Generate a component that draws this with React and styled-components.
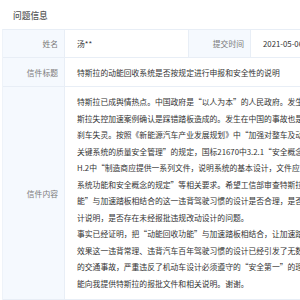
import React from 'react';
import styled, { createGlobalStyle } from 'styled-components';

const GlobalStyle = createGlobalStyle`
  html, body {
    margin: 0;
    padding: 0;
    background: #fff;
    overflow: hidden;
  }
  body {
    font-family: "Noto Sans CJK SC", "Noto Sans", sans-serif;
  }
`;

const StyledPage = styled.div`
  width: 100vw;
  height: 100vh;
  overflow: hidden;
`;

const SectionTitle = styled.h3`
  margin: 0;
  padding: 8px 13px 5px;
  font-size: 8.7px;
  line-height: 16px;
  font-weight: 500;
  color: #555;
`;

const InfoTable = styled.div`
  display: grid;
  grid-template-columns: 62px 124px 62px 124px;
  width: 372px;
  margin-left: 2px;
  border-top: 1px solid #e8eef6;
  border-left: 1px solid #eef3f9;
  font-size: 7.8px;
`;

const Label = styled.div`
  display: flex;
  align-items: center;
  justify-content: flex-end;
  box-sizing: border-box;
  min-height: ${(p) => p.$h || 28}px;
  padding: 0 6px;
  background: #f5f9fe;
  color: #7a7a7a;
  border-right: 1px solid #e8eef6;
  border-bottom: 1px solid #e8eef6;
  white-space: nowrap;
`;

const Value = styled.div`
  grid-column: span ${(p) => p.$span || 1};
  display: flex;
  align-items: center;
  box-sizing: border-box;
  min-height: ${(p) => p.$h || 28}px;
  padding: 0 12px;
  color: #333;
  border-right: 1px solid #e8eef6;
  border-bottom: 1px solid #e8eef6;
  white-space: nowrap;
`;

const Letter = styled.div`
  grid-column: span 3;
  box-sizing: border-box;
  padding: 7px 12px;
  color: #333;
  line-height: 16.5px;
  border-bottom: 1px solid #e8eef6;
`;

const LetterLine = styled.div`
  white-space: nowrap;
`;

const letterLines = [
  '特斯拉已成舆情热点。中国政府是“以人为本”的人民政府。发生在美国的特',
  '斯拉失控加速案例确认是踩错踏板造成的。发生在中国的事故也是车主称的',
  '刹车失灵。按照《新能源汽车产业发展规划》中“加强对整车及动力电池等',
  '关键系统的质量安全管理”的规定，国标21670中3.2.1“安全概念”',
  'H.2中“制造商应提供一系列文件，说明系统的基本设计，文件应说明',
  '系统功能和安全概念的规定”等相关要求。希望工信部审查特斯拉“动能回收功',
  '能”与加速踏板相结合的这一违背驾驶习惯的设计是否合理，是否提交了设',
  '计说明，是否存在未经报批违规改动设计的问题。',
  '事实已经证明，把“动能回收功能”与加速踏板相结合，让加速踏板具有制动',
  '效果这一违背常理、违背汽车百年驾驶习惯的设计已经引发了无数起严重',
  '的交通事故，严重违反了机动车设计必须遵守的“安全第一”的理念。希望工信部',
  '能向我提供特斯拉的报批文件和相关说明。谢谢。',
];

const App = () => (
  <StyledPage>
    <GlobalStyle />
    <SectionTitle>问题信息</SectionTitle>
    <InfoTable>
      <Label>姓名</Label>
      <Value>汤**</Value>
      <Label>提交时间</Label>
      <Value>2021-05-06 10:21:35</Value>

      <Label $h={29}>信件标题</Label>
      <Value $span={3} $h={29}>
        特斯拉的动能回收系统是否按规定进行申报和安全性的说明
      </Value>

      <Label>信件内容</Label>
      <Letter>
        {letterLines.map((line, i) => (
          <LetterLine key={i}>{line}</LetterLine>
        ))}
      </Letter>
    </InfoTable>
  </StyledPage>
);

export default App;
